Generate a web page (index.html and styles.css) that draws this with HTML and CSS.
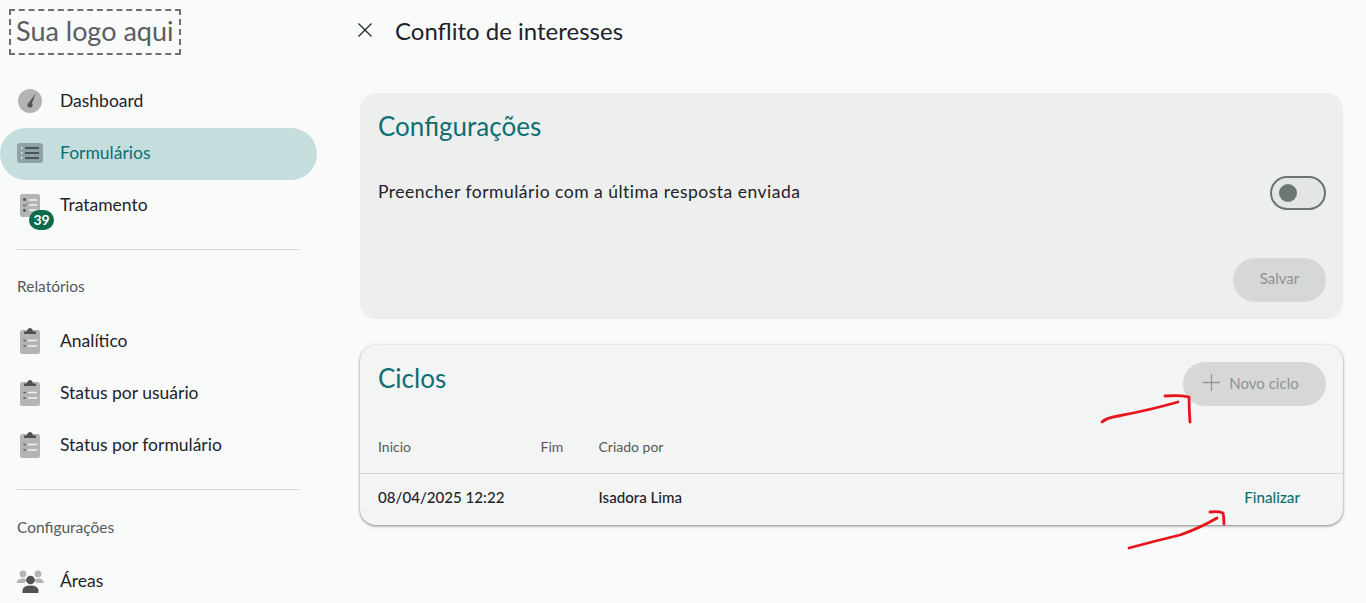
FILE: index.html
```html
<!DOCTYPE html>
<html lang="pt-BR">
<head>
    <meta charset="UTF-8">
    <meta name="viewport" content="width=device-width, initial-scale=1.0">
    <title>Conflito de interesses</title>
    <link rel="stylesheet" href="styles.css">
</head>
<body>
    <aside class="sidebar">
        <div class="logo">Sua logo aqui</div>

        <nav class="nav-group">
            <a class="nav-item">
                <svg class="nav-icon" viewBox="0 0 30 30">
                    <circle cx="15" cy="15" r="12" fill="#b4b4b4"/>
                    <path d="M20.5 7.5 L16.8 18 L13.6 17 Z" fill="#4f5660"/>
                    <circle cx="15" cy="19" r="2.6" fill="#4f5660"/>
                </svg>
                Dashboard
            </a>
            <a class="nav-item active">
                <svg class="nav-icon" viewBox="0 0 30 30">
                    <rect x="2" y="5" width="26" height="20" rx="3" fill="#8fa3a5"/>
                    <path d="M10 10 H24 M10 15 H24 M10 20 H24" stroke="#4b5558" stroke-width="2"/>
                    <path d="M6 10 H7.5 M6 15 H7.5 M6 20 H7.5" stroke="#d5e0e0" stroke-width="2"/>
                </svg>
                Formulários
            </a>
            <a class="nav-item">
                <span class="icon-wrap">
                    <svg class="nav-icon" viewBox="0 0 30 30">
                        <rect x="5" y="4" width="20" height="23" rx="2.5" fill="#b4b4b4"/>
                        <path d="M14 10 H22 M14 15 H22 M14 20 H22" stroke="#f1f3f3" stroke-width="1.5"/>
                        <circle cx="9.5" cy="9.5" r="1.4" fill="#4d4f52"/>
                        <path d="M8 15 L9.3 16.3 L11.5 13.8" stroke="#4d4f52" stroke-width="1" fill="none"/>
                        <circle cx="9.5" cy="20.5" r="1.4" fill="#4d4f52"/>
                    </svg>
                    <span class="badge">39</span>
                </span>
                Tratamento
            </a>
        </nav>

        <hr class="nav-divider">
        <div class="nav-title">Relatórios</div>

        <nav class="nav-group">
            <a class="nav-item">
                <svg class="nav-icon" viewBox="0 0 30 30">
                    <use href="#clipboard"/>
                </svg>
                Analítico
            </a>
            <a class="nav-item">
                <svg class="nav-icon" viewBox="0 0 30 30">
                    <use href="#clipboard"/>
                </svg>
                Status por usuário
            </a>
            <a class="nav-item">
                <svg class="nav-icon" viewBox="0 0 30 30">
                    <use href="#clipboard"/>
                </svg>
                Status por formulário
            </a>
        </nav>

        <hr class="nav-divider">
        <div class="nav-title nav-title-low">Configurações</div>

        <nav class="nav-group">
            <a class="nav-item">
                <svg class="nav-icon" viewBox="0 0 30 30">
                    <circle cx="8" cy="8" r="3.4" fill="#b4b4b4"/>
                    <circle cx="23" cy="8" r="3.4" fill="#b4b4b4"/>
                    <path d="M1.5 17 Q2 12.5 8 12.5 Q11 12.5 12.5 14 L9 17 Z M29 17 Q28.5 12.5 23 12.5 Q20 12.5 18.5 14 L22 17 Z" fill="#b4b4b4"/>
                    <circle cx="15.5" cy="14" r="4.3" fill="#4f5153"/>
                    <path d="M7.5 27 V24.5 Q8 19.5 15.5 19.5 Q23 19.5 23.5 24.5 V27 Z" fill="#4f5153"/>
                </svg>
                Áreas
            </a>
        </nav>
    </aside>

    <main class="content">
        <header class="page-header">
            <svg class="close-icon" viewBox="0 0 16 16">
                <path d="M1.5 1.5 L14.5 14.5 M14.5 1.5 L1.5 14.5" stroke="#22262a" stroke-width="1.3"/>
            </svg>
            <h1>Conflito de interesses</h1>
        </header>

        <section class="card settings-card">
            <h2>Configurações</h2>
            <div class="setting-row">
                <span class="setting-label">Preencher formulário com a última resposta enviada</span>
                <span class="toggle"><span class="toggle-dot"></span></span>
            </div>
            <div class="card-footer">
                <button class="btn-disabled">Salvar</button>
            </div>
        </section>

        <section class="card cycles-card">
            <div class="cycles-head">
                <h2>Ciclos</h2>
                <button class="btn-disabled btn-new">
                    <svg viewBox="0 0 16 16" class="plus-icon">
                        <path d="M8 0 V16 M0 8 H16" stroke="#949696" stroke-width="1.2"/>
                    </svg>
                    Novo ciclo
                </button>
            </div>
            <div class="table-row table-header">
                <span>Inicio</span>
                <span>Fim</span>
                <span>Criado por</span>
                <span></span>
            </div>
            <div class="table-row table-body">
                <span>08/04/2025 12:22</span>
                <span></span>
                <span>Isadora Lima</span>
                <a class="link-action">Finalizar</a>
            </div>
        </section>
    </main>

    <!-- anotacoes em vermelho por cima do print -->
    <svg class="annotations" viewBox="0 0 1366 603">
        <path d="M1102 422 Q1106 418 1118 416 Q1150 410 1178 402" />
        <path d="M1165 396 Q1180 395 1189 397 Q1189 408 1190 422" />
        <path d="M1129 548 Q1155 541 1180 535 Q1200 528 1217 518" />
        <path d="M1210 512 Q1218 511 1223 513 Q1224 518 1224 524" />
    </svg>

    <svg class="svg-defs" width="0" height="0">
        <symbol id="clipboard" viewBox="0 0 30 30">
            <rect x="5" y="4" width="20" height="24" rx="2.5" fill="#b4b4b4"/>
            <path d="M9 8 V5.5 H12 Q12.5 2 15 2 Q17.5 2 18 5.5 H21 V8 Z" fill="#4f5153"/>
            <path d="M13 14.5 H22 M13 20 H22" stroke="#f1f3f3" stroke-width="1.5"/>
            <path d="M8.5 14.5 H10.5 M8.5 20 H10.5" stroke="#4f5153" stroke-width="1.6"/>
        </symbol>
    </svg>
</body>
</html>
```

FILE: styles.css
```css
:root {
    --teal: #0c6f73;
    --text-color: #1f2227;
    --muted: #55585b;
    --page-bg: #f9fbfb;
    --disabled-bg: #d6d8d8;
    --disabled-text: #909292;
}

html, body {
    height: 100%;
}

body {
    font-family: 'Lato', 'Liberation Sans', sans-serif;
    background: var(--page-bg);
    margin: 0;
    color: var(--text-color);
    display: flex;
    overflow: hidden;
    position: relative;
}

/* Sidebar */
.sidebar {
    width: 317px;
    flex-shrink: 0;
    padding-top: 9px;
}

.logo {
    width: 172px;
    height: 46px;
    box-sizing: border-box;
    margin-left: 9px;
    margin-bottom: 21px;
    padding-left: 5px;
    border: 2px dashed #6d6f70;
    color: #5b5d60;
    font-size: 27px;
    line-height: 40px;
    white-space: nowrap;
}

.nav-item {
    display: flex;
    align-items: center;
    height: 52px;
    box-sizing: border-box;
    padding: 0 0 3px 15px;
    font-size: 17.5px;
    border-radius: 26px;
}

.nav-item.active {
    background: #c5dddd;
    color: var(--teal);
}

.nav-icon {
    width: 30px;
    height: 30px;
    margin-right: 15px;
    flex-shrink: 0;
}

.icon-wrap {
    display: flex;
    position: relative;
}

.badge {
    position: absolute;
    left: 14px;
    top: 20px;
    width: 25px;
    height: 20px;
    border-radius: 10px;
    background: #0b6b4b;
    color: white;
    font-size: 14px;
    font-weight: 700;
    line-height: 20px;
    text-align: center;
}

.nav-divider {
    border: none;
    border-top: 1px solid #d3d6d6;
    margin: 17px 18px 0 17px;
}

.nav-title {
    height: 66px;
    box-sizing: border-box;
    padding: 26px 0 0 17px;
    font-size: 15.5px;
    line-height: 20px;
    color: var(--muted);
}

.nav-title-low {
    padding-top: 27px;
}

/* Main */
.content {
    flex: 1;
    padding: 0 23px 0 43px;
}

.page-header {
    display: flex;
    align-items: center;
    height: 62px;
    margin-bottom: 31px;
    padding-bottom: 2px;
    box-sizing: border-box;
}

.close-icon {
    width: 16px;
    height: 16px;
    margin-left: -3px;
    margin-right: 22px;
}

h1 {
    margin: 0;
    font-size: 24px;
    font-weight: 400;
}

h2 {
    margin: 0;
    font-size: 26px;
    font-weight: 400;
    color: var(--teal);
    line-height: 32px;
}

.card {
    border-radius: 16px;
}

.settings-card {
    background: #edeeee;
    height: 226px;
    box-sizing: border-box;
    padding: 17px 17px 17px 18px;
    display: flex;
    flex-direction: column;
    margin-bottom: 26px;
}

.setting-row {
    display: flex;
    justify-content: space-between;
    align-items: center;
    margin-top: 34px;
    font-size: 17.5px;
    letter-spacing: 0.5px;
}

.setting-label {
    padding-bottom: 4px;
}

.toggle {
    width: 56px;
    height: 34px;
    box-sizing: border-box;
    border: 2px solid #6c7475;
    border-radius: 17px;
    background: #e3e5e6;
    display: flex;
    align-items: center;
    padding-left: 7px;
}

.toggle-dot {
    width: 18px;
    height: 18px;
    border-radius: 50%;
    background: #6c7675;
}

.card-footer {
    margin-top: auto;
    display: flex;
    justify-content: flex-end;
}

.btn-disabled {
    font-family: inherit;
    height: 44px;
    width: 93px;
    border: none;
    border-radius: 22px;
    background: var(--disabled-bg);
    color: var(--disabled-text);
    font-size: 15px;
    padding: 0 0 4px;
}

.cycles-card {
    background: #f3f4f4;
    height: 180px;
    box-sizing: border-box;
    box-shadow: 0 1px 3px rgba(0,0,0,0.5);
}

.cycles-head {
    display: flex;
    justify-content: space-between;
    align-items: flex-start;
    height: 72px;
    box-sizing: border-box;
    padding: 17px 17px 0 18px;
}

.btn-new {
    width: 143px;
    display: flex;
    align-items: center;
    justify-content: center;
    gap: 9px;
    padding: 0 7px 3px 0;
}

.plus-icon {
    width: 17px;
    height: 17px;
}

.table-row {
    display: grid;
    grid-template-columns: 162.5px 58px 1fr auto;
    padding: 0 43px 0 18px;
    align-items: center;
    box-sizing: border-box;
}

.table-header {
    height: 57px;
    padding-top: 3px;
    border-bottom: 1px solid #d6d8d8;
    font-size: 14px;
    color: var(--muted);
}

.table-body {
    height: 51px;
    padding-bottom: 5px;
    font-size: 15.1px;
    font-weight: 500;
}

.link-action {
    color: var(--teal);
    font-size: 15.2px;
}

/* Overlay */
.annotations {
    position: absolute;
    left: 0;
    top: 0;
    width: 1366px;
    height: 603px;
    pointer-events: none;
}

.annotations path {
    fill: none;
    stroke: #e8141c;
    stroke-width: 2.8;
    stroke-linecap: round;
    stroke-linejoin: round;
}

.svg-defs {
    position: absolute;
}
```
